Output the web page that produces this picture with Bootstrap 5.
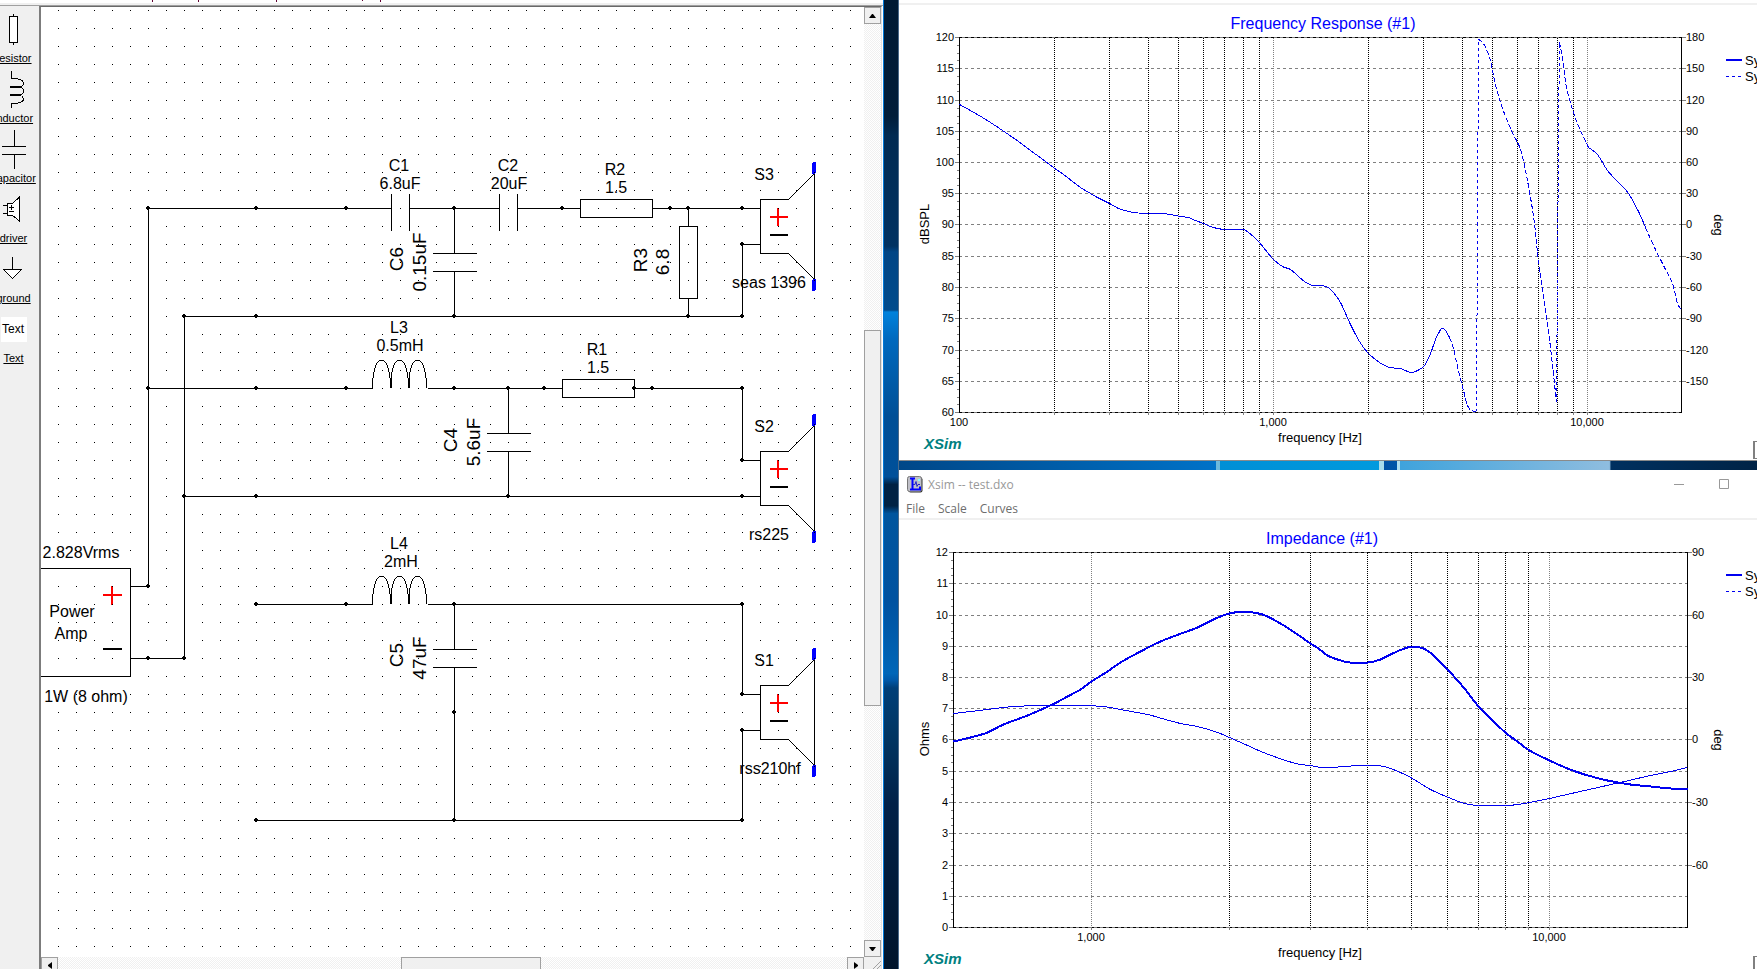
<!DOCTYPE html>
<html lang="en">
<head>
<meta charset="utf-8">
<meta name="viewport" content="width=device-width, initial-scale=1">
<title>XSim</title>
<link href="https://cdn.jsdelivr.net/npm/bootstrap@5.3.0/dist/css/bootstrap.min.css" rel="stylesheet">
<script src="https://cdn.jsdelivr.net/npm/bootstrap@5.3.0/dist/js/bootstrap.bundle.min.js"></script>
<style>
  :root { --face: #f0f0f0; --edge: #a0a0a0; --ink: #000; --trace: #0000f0; }
  body { font-family: "Liberation Sans", Arial, sans-serif; color: var(--ink); background: #00264d; }
  .desktop { display: grid; grid-template-columns: minmax(0, 883fr) 16fr minmax(0, 858fr); }
  .wallpaper {
    border-left: 1px solid #0078d7; border-right: 1px solid #4a6a8a;
    background: linear-gradient(#001a33 0, #001d3a 12%, #002a52 14%, #003262 25.4%, #004585 26%, #004b8c 32%, #0082dc 32.2%, #0069be 35%, #004f96 43%, #00509a 49.2%, #002244 50%, #002244 52.2%, #00559e 53%, #0052a0 62%, #0066b8 69.5%, #0058a8 70.2%, #003f78 71%, #003562 76%, #002148 83%, #00152c 100%);
  }
  .wallpaper-strip {
    height: 9px;
    background: linear-gradient(90deg, #004788 0, #0072c8 37%, #6db9dc 37%, #6db9dc 37.4%, #008fd6 37.4%, #009ade 56%, #a8dcec 56%, #a8dcec 56.5%, #0052a5 56.5%, #0055a8 58%, #b0dff0 58%, #b0dff0 58.4%, #3fa3dc 58.4%, #8fbddf 82.8%, #00305f 83%, #002346 100%);
  }

  /* schematic editor */
  .menu-sliver { height: 6px; border-bottom: 1px solid var(--edge); background: linear-gradient(#fff 3px, var(--face) 3px); }
  .toolbox { width: 39px; background: var(--face); overflow: hidden; }
  .tool { width: 27px; height: 60px; border: 0; padding: 0; background: none; display: flex; flex-direction: column; align-items: center; font-size: 11px; line-height: 14px; text-decoration: underline; white-space: nowrap; color: #000; }
  .tool svg { width: 27px; height: 45px; flex: none; overflow: visible; fill: none; stroke: #000; shape-rendering: crispEdges; }
  .sheet { display: grid; grid-template: minmax(0, 1fr) 12px / minmax(0, 1fr) 17px; background: #fff; border-left: 2px solid #7c7c7c; border-top: 1px solid #696969; border-right: 1px solid #e3e3e3; margin-right: 1px; }
  .sheet > svg { width: 100%; height: 100%; overflow: hidden; display: block; }
  .sheet text { font-size: 16px; }
  .sheet .upright { font-size: 19px; text-anchor: middle; }
  .mid { text-anchor: middle; }
  .crisp { shape-rendering: crispEdges; fill: none; stroke: #000; }
  .live { stroke: #f00; }
  .bar-track { background: repeating-conic-gradient(#f0f0f0 0 25%, #fff 0 50%) 0 0 / 2px 2px; }
  .bar-thumb, .bar-btn { background: var(--face); border: 1px solid var(--edge); padding: 0; border-radius: 0; }
  .bar-btn { flex: 0 0 17px; display: flex; align-items: center; justify-content: center; }
  .hbar .bar-btn, .hbar .bar-thumb { height: 17px; }
  .grip { background: var(--face); overflow: hidden; }

  /* graph windows */
  .graph-window { background: #fff; }
  .graph-window.first { border-bottom: 1px solid #8a8a8a; }
  .menu-edge { border-bottom: 2px solid var(--face); }
  .menu-bottom { height: 5px; }
  .title-row { height: 30px; padding: 6px 11px 0 8px; gap: 5px; color: #999; font: 12px/18px "Open Sans", "Noto Sans", sans-serif; }
  .menu-row { height: 20px; padding-left: 7px; gap: 13px; font: 12px/18px "Open Sans", "Noto Sans", sans-serif; }
  .menu-row a { color: #6d6d6d; text-decoration: none; }
  .win-btn { border: 0; background: none; padding: 0; width: 45px; height: 16px; display: flex; align-items: center; justify-content: center; }
  .graph { display: block; width: 100%; height: auto; }
  .graph text { font-size: 13px; }
  .graph .tick-label { font-size: 11px; }
  .graph .graph-title { font-size: 16px; fill: #00f; text-anchor: middle; }
  .graph .brand { font-size: 15px; font-weight: bold; font-style: italic; fill: #008080; }
  .graph path { fill: none; stroke: #808080; shape-rendering: crispEdges; }
  .graph .axis { stroke: #000; }
  .graph .major { stroke-dasharray: 3 3; }
  .graph .rim { stroke: #000; stroke-dasharray: 3 3; }
  .graph .decade { stroke-dasharray: 1 1; }
  .graph .minor { stroke: #000; stroke-dasharray: 1 1; }
  .graph .trace { stroke: var(--trace); }
  .graph .bold { stroke-width: 2; }
  .graph .dashed { stroke-dasharray: 3 3; }
  .graph .longdash { stroke-dasharray: 5 2; }
</style>
</head>
<body class="overflow-hidden">
<div class="desktop vh-100">

  <section class="d-flex flex-column bg-white overflow-hidden" aria-label="Schematic">
    <svg class="menu-sliver w-100 flex-shrink-0 d-block" aria-hidden="true"><path d="M152.500 0v2M198.500 0v2M276.500 0v2M362.500 0v1M380.500 0v2" stroke="#600030" shape-rendering="crispEdges"/></svg>
    <div class="d-flex flex-grow-1" style="min-height:0">
      <nav class="toolbox flex-shrink-0" aria-label="Parts">
        <button class="tool"><svg viewBox="0 6 27 45"><path d="M13.500 14v2M13.500 43v2"/><rect x="9.500" y="16.500" width="8" height="26" fill="#fff"/></svg>resistor</button>
        <button class="tool"><svg viewBox="0 66 27 45"><path d="M11.500 71v7.500C18 78.500 23.500 80 23.500 83S20 87 17 87M17 87c4 0 6.500 1 6.500 4s-3 4-6.500 4M17 95c4 0 6.500 2 6.500 4.500s-5 4-9 4h-3.500v4"/><path d="M10 87h9M10 95h9" stroke-width="2"/></svg>inductor</button>
        <button class="tool"><svg viewBox="0 126 27 45"><path d="M14.500 130v16M2 146.500h24M2 154.500h24M14.500 154v15"/></svg>capacitor</button>
        <button class="tool"><svg viewBox="0 186 27 45"><path d="M3 205.500h4M3 213.500h4"/><path d="M7.500 203.500h5l7-6.500v24l-7-5.500h-5z" fill="#fff"/><path d="M9 207.500h5M11.500 205v5M9 211.500h5"/></svg>driver</button>
        <button class="tool"><svg viewBox="0 246 27 45"><path d="M12.500 257v12"/><path d="M3.500 269.500h18l-9 9z" fill="#fff"/></svg>ground</button>
        <button class="tool"><svg viewBox="0 306 27 45"><rect x="1" y="317" width="26" height="25" fill="#fff" stroke="none"/><text x="2" y="333" font-size="12" fill="#000" stroke="none">Text</text></svg>Text</button>
      </nav>

      <div class="sheet flex-grow-1">
        <svg aria-label="Crossover schematic">
          <defs>
            <pattern id="dots" x="58" y="10" width="18" height="18" patternUnits="userSpaceOnUse"><rect width="1" height="1"/></pattern>
            <g id="node"><path d="M-2-1h4v2h-4zM-1-2h2v4h-2z" shape-rendering="crispEdges"/></g>
            <g id="speaker">
              <path class="crisp" d="M.500-8.500h28l26-26v106l-26-26h-28z"/>
              <path class="crisp live" stroke-width="2" d="M10 9h18M18 0v18"/>
              <path class="crisp" stroke-width="2" d="M10 27h18"/>
              <path d="M53-46h3v11h-1v1h-3v-11h1zM53 71h3v11h-1v1h-3v-11h1z" fill="#00f" shape-rendering="crispEdges"/>
            </g>
            <path id="coil" class="crisp" d="M.500 0C.500-16 4-28 9.500-28S18.500-16 18.500 0C18.500-16 22-28 27.500-28S36.500-16 36.500 0C36.500-16 40-28 45.500-28S54.500-16 54.500 0M19-13V0M37-13V0"/>
          </defs>
          <g transform="translate(-41 -7)">
            <g class="crisp" transform="translate(.5 .5)">
              <path d="M148 208H391M391 193v37M409 193v37M409 208h90M499 193v37M517 193v37M517 208h63M580 199h72v18h-72zM652 208h108"/>
              <path d="M454 208v45M432 253h44M432 271h44M454 271v45M688 208v18M679 226h18v72h-18zM688 298v18"/>
              <path d="M184 316h558v-72h18M148 388h224M427 388h135M562 379h72v18h-72zM634 388h108v72h18"/>
              <path d="M508 388v45M486 433h44M486 451h44M508 451v45M184 496h576"/>
              <path d="M148 208v378h-18M184 316v342h-54M30 568h100v108H30"/>
              <path d="M256 604h116M427 604h315v90h18M454 604v45M432 649h44M432 667h44M454 667v153M256 820h486v-90h18"/>
            </g>
            <use href="#coil" x="372" y="388"/><use href="#coil" x="372" y="604"/>
            <use href="#speaker" x="760" y="208"/><use href="#speaker" x="760" y="460"/><use href="#speaker" x="760" y="694"/>
            <path class="crisp live" stroke-width="2" d="M103 595h19M112 586v19"/>
            <path class="crisp" stroke-width="2" d="M103 649h19"/>
            <g id="nodes"></g>
            <rect x="42" y="7" width="815" height="950" fill="url(#dots)"/>
            <g class="mid">
              <text x="399" y="171">C1</text><text x="400" y="189">6.8uF</text>
              <text x="508" y="171">C2</text><text x="509" y="189">20uF</text>
              <text x="615" y="175">R2</text><text x="616" y="193">1.5</text>
              <text x="399" y="333">L3</text><text x="400" y="351">0.5mH</text>
              <text x="597" y="355">R1</text><text x="598" y="373">1.5</text>
              <text x="399" y="549">L4</text><text x="401" y="567">2mH</text>
              <text x="764" y="180">S3</text><text x="769" y="288">seas 1396</text>
              <text x="764" y="432">S2</text><text x="769" y="540">rs225</text>
              <text x="764" y="666">S1</text><text x="770" y="774">rss210hf</text>
              <text x="81" y="558">2.828Vrms</text>
              <text x="72" y="617">Power</text><text x="71" y="639">Amp</text>
              <text x="86" y="702">1W (8 ohm)</text>
            </g>
            <text class="upright" transform="translate(403 259) rotate(-90)">C6</text>
            <text class="upright" transform="translate(426 262) rotate(-90)">0.15uF</text>
            <text class="upright" transform="translate(647 260) rotate(-90)">R3</text>
            <text class="upright" transform="translate(669 262) rotate(-90)">6.8</text>
            <text class="upright" transform="translate(457 440) rotate(-90)">C4</text>
            <text class="upright" transform="translate(480 442) rotate(-90)">5.6uF</text>
            <text class="upright" transform="translate(403 655) rotate(-90)">C5</text>
            <text class="upright" transform="translate(426 658) rotate(-90)">47uF</text>
          </g>
        </svg>
        <div class="d-flex flex-column bar-track">
          <button class="bar-btn" aria-label="Scroll up"><svg width="7" height="4"><path d="M3 0h1l3 4H0z"/></svg></button>
          <div style="flex:307"></div><div class="bar-thumb" style="flex:374"></div><div style="flex:235"></div>
          <button class="bar-btn" aria-label="Scroll down"><svg width="7" height="4"><path d="M0 0h7L4 4H3z"/></svg></button>
        </div>
        <div class="d-flex bar-track hbar overflow-hidden">
          <button class="bar-btn" aria-label="Scroll left"><svg width="4" height="7"><path d="M4 0v7L0 4V3z"/></svg></button>
          <div style="flex:344"></div><div class="bar-thumb" style="flex:138"></div><div style="flex:307"></div>
          <button class="bar-btn" aria-label="Scroll right"><svg width="4" height="7"><path d="M0 0v7l4-3V3z"/></svg></button>
        </div>
        <div class="grip"><svg width="17" height="17" class="d-block"><path d="M4 17L17 4M8 17l9-9M12 17l5-5" stroke="#a0a0a0"/></svg></div>
      </div>
    </div>
  </section>

  <div class="wallpaper"></div>

  <div class="d-flex flex-column overflow-hidden">
    <section class="graph-window first flex-shrink-0" aria-label="Frequency response">
      <div class="menu-edge menu-bottom"></div>
      <svg class="graph" id="response" viewBox="899 5 858 455"></svg>
    </section>
    <div class="wallpaper-strip flex-shrink-0"></div>
    <section class="graph-window flex-grow-1" aria-label="Impedance">
      <div class="title-row d-flex">
        <svg width="16" height="17" class="flex-shrink-0" aria-hidden="true">
          <rect x="1.500" y="1.500" width="14" height="15" rx="2" fill="#333"/><rect x=".500" y=".500" width="14" height="15" rx="2" fill="#c0c0c8" stroke="#777"/>
          <path d="M3 2.500h5M5.500 2v11M3 13.500h10v-3" stroke="#00f" stroke-width="2" fill="none"/>
          <path d="M6 8.500h2l1-3 1 5 1-2h2" stroke="#22c" fill="none"/><path d="M11 3h2v2h-2z" fill="#8ff"/>
        </svg>
        <span>Xsim -- test.dxo</span>
        <div class="ms-auto d-flex">
          <button class="win-btn" aria-label="Minimize"><svg width="10" height="10"><path d="M0 5.500h10" stroke="#999"/></svg></button>
          <button class="win-btn" aria-label="Maximize"><svg width="10" height="10"><path d="M.500.500h9v9h-9z" fill="none" stroke="#999"/></svg></button>
        </div>
      </div>
      <nav class="menu-row menu-edge d-flex"><a href="#">File</a><a href="#">Scale</a><a href="#">Curves</a></nav>
      <svg class="graph" id="impedance" viewBox="899 5 858 455"></svg>
    </section>
  </div>
</div>

<script>
  // junctions of the schematic, keyed by row
  const junctions = {
    208: [148, 256, 346, 454, 562, 670, 688, 742], 244: [742],
    316: [184, 256, 454, 688, 742], 388: [148, 256, 346, 454, 508, 544, 634, 652, 742],
    460: [742], 496: [184, 256, 508, 742], 586: [148], 604: [256, 346, 454, 742],
    658: [148, 184], 694: [742], 712: [454], 730: [742], 820: [256, 454, 742]
  };
  document.getElementById('nodes').innerHTML = Object.entries(junctions)
    .flatMap(([y, xs]) => xs.map(x => `<use href="#node" x="${x}" y="${y}"/>`)).join('');

  const rows = [37, 68, 100, 131, 162, 193, 224, 256, 287, 318, 350, 381, 412];

  // smooth path through "x y x y ..." samples
  function curve(samples) {
    const n = samples.split(' ').map(Number), p = [];
    for (let i = 0; i < n.length; i += 2) p.push([n[i] + .5, n[i + 1] + .5]);
    let d = 'M' + p[0];
    for (let i = 0; i < p.length - 1; i++) {
      const a = p[i - 1] || p[i], b = p[i], c = p[i + 1], e = p[i + 2] || c;
      d += `C${b[0] + (c[0] - a[0]) / 6} ${b[1] + (c[1] - a[1]) / 6} ${c[0] - (e[0] - b[0]) / 6} ${c[1] - (e[1] - b[1]) / 6} ${c[0]} ${c[1]}`;
    }
    return d;
  }

  function drawGraph(id, g) {
    const out = [];
    const line = (cls, d) => out.push(`<path class="${cls}" d="${d}"/>`);
    const label = (cls, x, y, s, anchor) => out.push(`<text class="${cls}" x="${x}" y="${y}" text-anchor="${anchor}">${s}</text>`);
    const turned = (x, y, a, s) => out.push(`<text text-anchor="middle" transform="translate(${x} ${y}) rotate(${a})">${s}</text>`);
    const xOf = f => Math.round(g.x1000 + g.decade * Math.log10(f / 1000));

    rows.forEach((y, i) => {
      const edge = i === 0 || i === rows.length - 1;
      line(edge ? '' : 'major', `M${g.left} ${y + .5}H${g.right}`);
      if (edge) line('rim', `M${g.left} ${y + .5}H${g.right}`);
      line('', `M${g.left - 4} ${y + .5}h4`);
      if (i < 12) for (let k = 1; k < 4; k++) line('', `M${g.left - 2} ${Math.round(y + k * 7.8) + .5}h2`);
      label('tick-label', g.left - 5, y + 4, g.leftLabels[i], 'end');
      if (g.rightLabels[i] !== undefined) {
        line('', `M${g.right + 1} ${y + .5}h4`);
        label('tick-label', g.right + 5, y + 4, g.rightLabels[i], 'start');
      }
    });
    for (const base of g.bases) for (let m = 1; m < 10; m++) {
      const x = xOf(base * m);
      if (x <= g.left + 1 || x >= g.right - 1) continue;
      line(m === 1 ? 'decade' : 'minor', `M${x + .5} 38V412`);
      line('', `M${x + .5} 412v3`);
    }
    line('axis', `M${g.left + .5} 37V413M${g.right + .5} 37V413`);
    for (const [f, s] of g.freqs) label('tick-label', xOf(f), 426, s, 'middle');
    for (const [cls, pts] of g.traces) line('trace ' + cls, curve(pts));
    label('graph-title', g.titleX, 29, g.title, 'middle');
    label('', 1320, 442, 'frequency [Hz]', 'middle');
    label('brand', 924, 449, 'XSim', 'start');
    turned(929, 224, -90, g.unit);
    turned(1714, 225, 90, 'deg');
    line('trace bold', 'M1726 60h16');
    line('trace dashed', 'M1726 76.500h16');
    label('', 1745, 65, 'Sy', 'start');
    label('', 1745, 81, 'Sy', 'start');
    line('', 'M1753 441.500h10M1753 458h10');
    line('bold', 'M1753.500 441v17');
    document.getElementById(id).innerHTML = out.join('');
  }

  drawGraph('response', {
    left: 959, right: 1681, x1000: 1273, decade: 314, bases: [100, 1000, 10000],
    title: 'Frequency Response (#1)', titleX: 1323, unit: 'dBSPL',
    leftLabels: [120, 115, 110, 105, 100, 95, 90, 85, 80, 75, 70, 65, 60],
    rightLabels: [180, 150, 120, 90, 60, 30, 0, -30, -60, -90, -120, -150],
    freqs: [[100, '100'], [1000, '1,000'], [10000, '10,000']],
    traces: [
      ['', '959 104 977 114 990 122 1005 132 1018 141 1030 150 1041 158 1053 167 1063 174 1080 187 1090 193 1097 197 1109 203 1118 208 1125 210 1133 212 1147 213 1162 213 1170 214 1180 216 1188 217 1195 220 1203 223 1210 226 1217 228 1225 229 1242 229 1248 232 1258 241 1263 247 1273 259 1282 266 1290 269 1297 275 1304 281 1312 285 1317 285 1326 286 1332 291 1340 302 1350 324 1359 341 1367 352 1379 362 1389 367 1400 368 1410 372 1417 370 1424 365 1430 353 1435 339 1439 331 1441 328 1445 330 1449 337'],
      ['longdash', '1449 337 1453 348 1457 366 1463 390 1467 405 1471 410 1476 411'],
      ['dashed', '1476 411 1478 39'],
      ['longdash', '1478 39 1483 43 1489 57 1493 75 1497 92 1502 108 1510 128 1518 144 1521 152 1525 170 1530 197 1534 223 1538 260 1547 323 1552 365 1556 402'],
      ['dashed', '1556 402 1558 140 1559 42'],
      ['longdash', '1559 42 1562 58 1566 87 1573 112 1580 130 1588 147'],
      ['', '1588 147 1597 154 1607 170 1619 183 1628 193 1639 213 1645 227'],
      ['longdash', '1645 227 1654 247 1664 267 1672 283 1677 303 1681 309']
    ]
  });

  drawGraph('impedance', {
    left: 953, right: 1687, x1000: 1091, decade: 458, bases: [1000, 10000],
    title: 'Impedance (#1)', titleX: 1322, unit: 'Ohms',
    leftLabels: [12, 11, 10, 9, 8, 7, 6, 5, 4, 3, 2, 1, 0],
    rightLabels: [90, , 60, , 30, , 0, , -30, , -60],
    freqs: [[1000, '1,000'], [10000, '10,000']],
    traces: [
      ['bold', '953 226 970 222 987 217 1003 209 1027 200 1052 189 1067 181 1080 174 1091 166 1107 156 1120 147 1140 136 1160 126 1178 119 1197 112 1215 103 1229 98 1243 96 1258 98 1267 101 1285 111 1297 119 1310 128 1318 133 1327 140 1337 144 1349 147 1368 147 1380 144 1392 138 1404 133 1412 131 1423 133 1432 139 1448 155 1464 173 1478 191 1492 205 1506 218 1517 226 1529 235 1549 245 1567 253 1584 259 1607 265 1630 269 1650 271 1670 273 1687 273'],
      ['', '953 198 970 196 987 194 1013 191 1047 190 1080 190 1103 191 1120 194 1147 199 1158 202 1180 208 1197 211 1217 217 1229 222 1247 230 1263 237 1285 245 1300 249 1310 250 1320 252 1330 252 1344 251 1360 250 1377 250 1387 252 1400 257 1412 263 1430 274 1448 282 1464 288 1478 290 1506 290 1517 289 1529 287 1549 283 1584 275 1624 266 1650 260 1670 256 1687 252']
    ]
  });
</script>
</body>
</html>
